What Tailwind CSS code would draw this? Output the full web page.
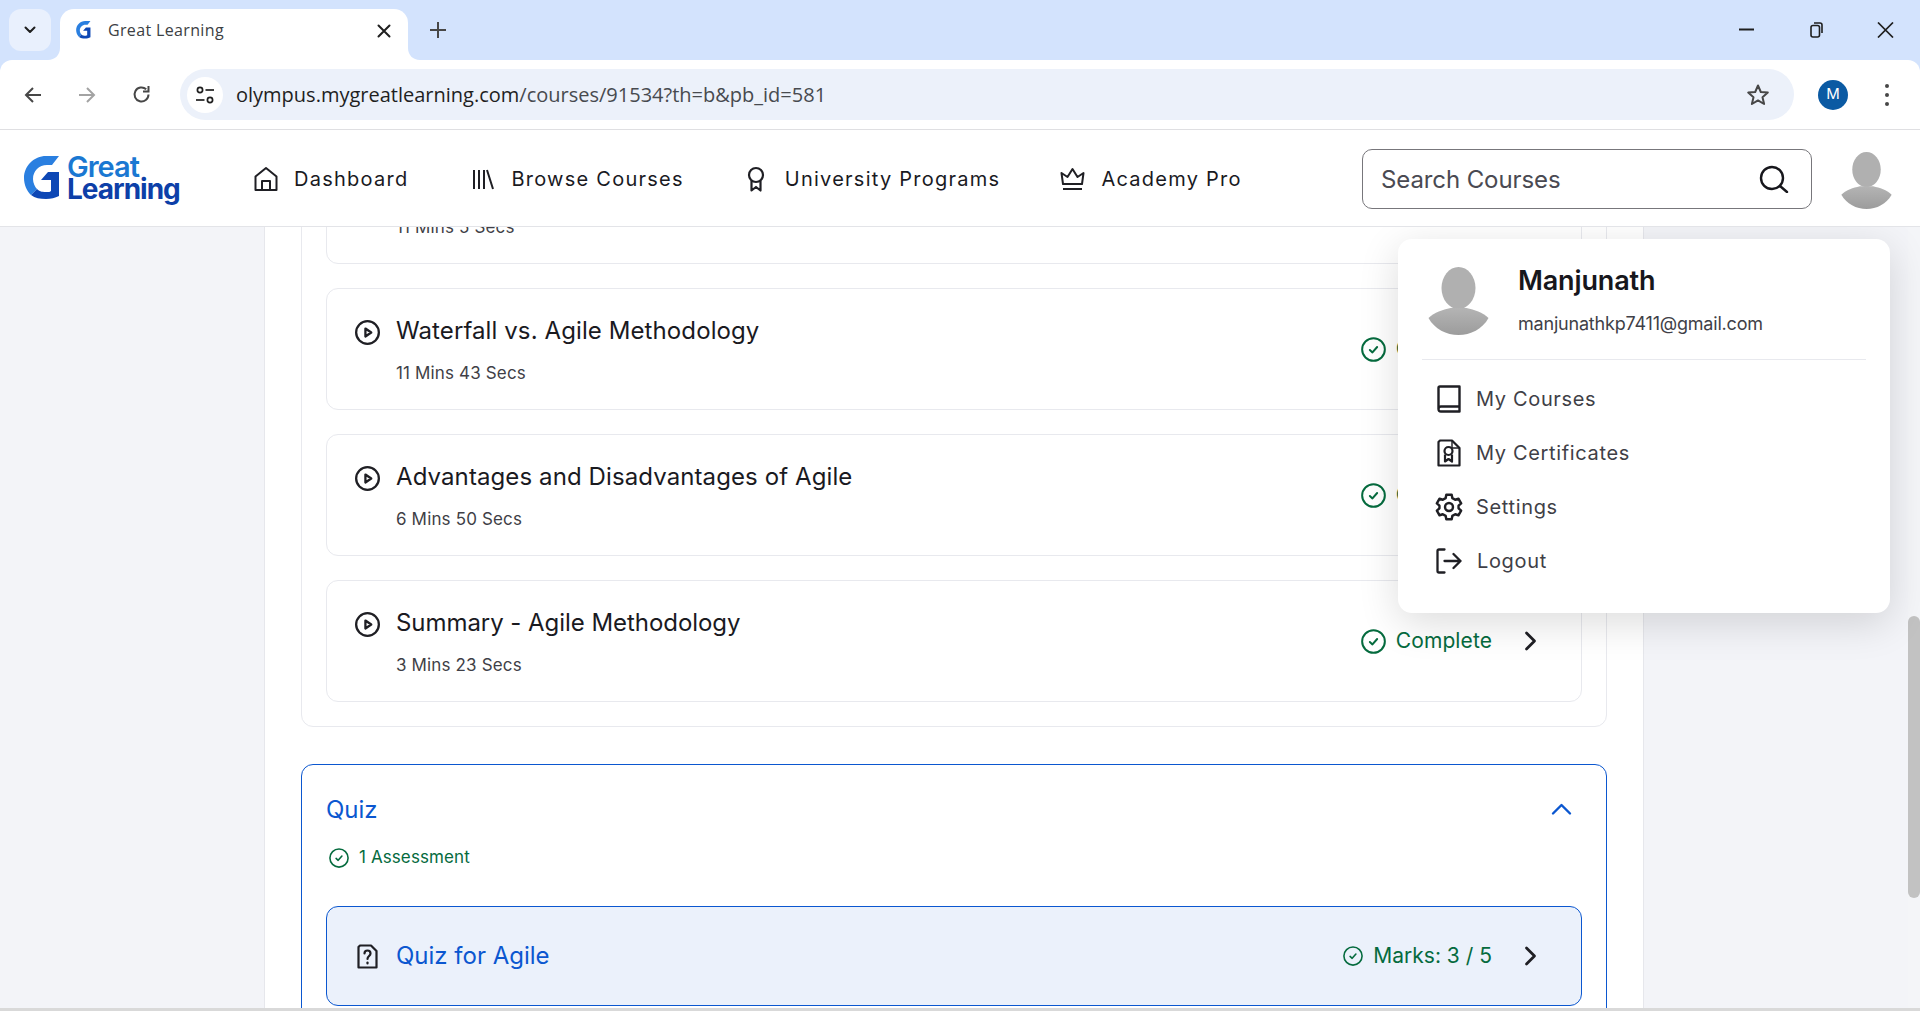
<!DOCTYPE html>
<html lang="en">
<head>
    <meta charset="UTF-8">
    <meta name="viewport" content="width=device-width, initial-scale=1.0">
    <title>Great Learning</title>
    <script src="https://cdn.jsdelivr.net/npm/@tailwindcss/browser@4"></script>
</head>
<body class="h-screen overflow-hidden flex flex-col bg-[#d3e3fd] font-['Inter',sans-serif] text-[#1a1a1f]">
    <!-- Shared icons -->
    <svg class="absolute w-0 h-0">
        <defs>
            <linearGradient id="avatarFill" x1="0" y1="0" x2="0" y2="1">
                <stop offset="0" stop-color="#b4b4b4"/>
                <stop offset="1" stop-color="#9c9c9c"/>
            </linearGradient>
            <symbol id="avatar" viewBox="0 0 60 68">
                <ellipse cx="30" cy="21" rx="17" ry="21" fill="#b0b0b0"/>
                <path d="M0 51 C6 45 14 43 22 41 L38 41 C46 43 54 45 60 51 C54 62 42 68 30 68 C18 68 6 62 0 51 Z" fill="url(#avatarFill)"/>
            </symbol>
            <symbol id="check" viewBox="0 0 24 24">
                <circle cx="12" cy="12" r="10.9" fill="none" stroke="currentColor" stroke-width="1.9"/>
                <path d="M8.5 12.5 L11 14.8 L15.5 9.6" fill="none" stroke="currentColor" stroke-width="1.9" stroke-linecap="round" stroke-linejoin="round"/>
            </symbol>
            <symbol id="play" viewBox="0 0 24 24">
                <circle cx="12" cy="12" r="10.9" fill="none" stroke="currentColor" stroke-width="2.2"/>
                <path d="M10 8.2 L15.6 12 L10 15.8 Z" fill="none" stroke="currentColor" stroke-width="2.2" stroke-linejoin="round"/>
            </symbol>
            <symbol id="chevron" viewBox="0 0 12 20">
                <path d="M2 2 L10 10 L2 18" fill="none" stroke="currentColor" stroke-width="2.8" stroke-linecap="round" stroke-linejoin="round"/>
            </symbol>
        </defs>
    </svg>

    <!-- Tab strip -->
    <div class="h-[60px] shrink-0 flex items-start text-[#1f1f1f]">
        <div class="ml-[9px] mt-[9px] w-[42px] h-[42px] rounded-[12px] bg-[#e9f0fd] flex items-center justify-center">
            <svg width="14" height="10" viewBox="0 0 14 10"><path d="M2.5 2.5 L7 7 L11.5 2.5" fill="none" stroke="#1f1f1f" stroke-width="2" stroke-linecap="round" stroke-linejoin="round"/></svg>
        </div>
        <div class="relative ml-[9px] mt-[9px] w-[348px] h-[51px] bg-white rounded-t-[14px] flex items-center pl-[16px] pb-[9px]">
            <svg class="absolute -left-[12px] bottom-0" width="12" height="12" viewBox="0 0 12 12"><path d="M12 0 V12 H0 C7 12 12 7 12 0 Z" fill="#fff"/></svg>
            <svg class="absolute -right-[12px] bottom-0" width="12" height="12" viewBox="0 0 12 12"><path d="M0 0 V12 H12 C5 12 0 7 0 0 Z" fill="#fff"/></svg>
            <svg width="15" height="18" viewBox="0 0 36 44">
                <path d="M35 0 L28 9 H23 C15 9 9 15 9 23 C9 27 11 31 13 33 L7 39 C3 35 0 29 0 22 C0 10 10 0 22 0 Z" fill="#2a7fe0"/>
                <path d="M7 39 L13 33 C16 36 19 36 23 36 C25 36 26 36 27 35 V24 H17 L24 16 H35 V40 C31 42 27 43 22 43 C16 43 11 42 7 39 Z" fill="#0d47b5"/>
            </svg>
            <span class="ml-[17px] text-[16px] tracking-[0.35px] text-[#3c4043] font-['Open_Sans',sans-serif]">Great Learning</span>
            <svg class="absolute left-[317px] top-[15px]" width="14" height="14" viewBox="0 0 14 14"><path d="M1.5 1.5 L12.5 12.5 M12.5 1.5 L1.5 12.5" stroke="#1f1f1f" stroke-width="2" stroke-linecap="round"/></svg>
        </div>
        <svg class="ml-[21px] mt-[21px]" width="18" height="18" viewBox="0 0 18 18"><path d="M9 1 V17 M1 9 H17" stroke="#474747" stroke-width="2"/></svg>

        <div class="ml-auto flex items-center mt-[21px] mr-[26px]">
            <svg width="15" height="18" viewBox="0 0 15 18"><path d="M0 8.5 H15" stroke="#1f1f1f" stroke-width="2"/></svg>
            <svg class="ml-[56px]" width="13" height="16" viewBox="0 0 13 16"><rect x="1" y="3.5" width="8.5" height="11.5" rx="2" fill="none" stroke="#1f1f1f" stroke-width="1.6"/><path d="M4 1 H10 C11.2 1 12 1.8 12 3 V11" fill="none" stroke="#1f1f1f" stroke-width="1.6"/></svg>
            <svg class="ml-[54px]" width="17" height="16" viewBox="0 0 17 16"><path d="M1 0.5 L16 15.5 M16 0.5 L1 15.5" stroke="#1f1f1f" stroke-width="1.7"/></svg>
        </div>
    </div>

    <!-- Browser toolbar -->
    <div class="h-[70px] shrink-0 bg-white rounded-t-[12px] border-b border-[#dfdfe2] flex items-center text-[#474747]">
        <svg class="ml-[24px]" width="18" height="18" viewBox="0 0 18 18"><path d="M17 9 H2 M9 2 L2 9 L9 16" fill="none" stroke="#474747" stroke-width="2"/></svg>
        <svg class="ml-[36px]" width="18" height="18" viewBox="0 0 18 18"><path d="M1 9 H16 M9 2 L16 9 L9 16" fill="none" stroke="#a3a3a3" stroke-width="2"/></svg>
        <svg class="ml-[36px]" width="19" height="19" viewBox="0 0 19 19"><path d="M16.5 9.5 A7 7 0 1 1 14.2 4.3" fill="none" stroke="#474747" stroke-width="2"/><path d="M16.5 1 V6.5 H11" fill="none" stroke="#474747" stroke-width="2"/></svg>
        <div class="ml-[29px] w-[1614px] h-[51px] rounded-full bg-[#ecf1fa] flex items-center pl-[7px] pr-[24px]">
            <div class="w-[36px] h-[36px] rounded-full bg-white flex items-center justify-center">
                <svg width="20" height="20" viewBox="0 0 20 20" fill="none" stroke="#1f1f1f" stroke-width="1.7"><circle cx="5" cy="5" r="2.6"/><path d="M10.5 5 H19"/><circle cx="15" cy="15" r="2.6"/><path d="M1 15 H9.5"/></svg>
            </div>
            <span class="ml-[13px] text-[20px] text-[#1f1f1f] font-['Open_Sans',sans-serif]">olympus.mygreatlearning.com<span class="text-[#474a4f]">/courses/91534?th=b&amp;pb_id=581</span></span>
            <svg class="ml-auto" width="24" height="24" viewBox="0 0 24 24"><path d="M12 2.5 L14.8 9 L21.8 9.6 L16.5 14.2 L18.1 21 L12 17.4 L5.9 21 L7.5 14.2 L2.2 9.6 L9.2 9 Z" fill="none" stroke="#474747" stroke-width="2" stroke-linejoin="round"/></svg>
        </div>
        <div class="ml-[24px] w-[30px] h-[30px] rounded-full bg-[#0b5aa3] text-white text-[15px] flex items-center justify-center">M</div>
        <div class="ml-[37px] flex flex-col gap-[5px]">
            <span class="w-[4px] h-[4px] rounded-full bg-[#474747]"></span>
            <span class="w-[4px] h-[4px] rounded-full bg-[#474747]"></span>
            <span class="w-[4px] h-[4px] rounded-full bg-[#474747]"></span>
        </div>
    </div>

    <!-- Site header -->
    <header class="relative z-10 h-[97px] shrink-0 bg-white border-b border-[#e3e4e8] flex items-center">
        <div class="ml-[24px] w-[230px] flex items-center">
            <svg width="36" height="44" viewBox="0 0 36 44">
                <path d="M35 0 L28 9 H23 C15 9 9 15 9 23 C9 27 11 31 13 33 L7 39 C3 35 0 29 0 22 C0 10 10 0 22 0 Z" fill="#2a7fe0"/>
                <path d="M7 39 L13 33 C16 36 19 36 23 36 C25 36 26 36 27 35 V24 H17 L24 16 H35 V40 C31 42 27 43 22 43 C16 43 11 42 7 39 Z" fill="#0d47b5"/>
            </svg>
            <div class="ml-[7px] font-semibold tracking-[-1px]">
                <div class="text-[29px] leading-[22px] text-[#1a78d2]">Great</div>
                <div class="text-[28px] leading-[22px] font-bold text-[#0d3fa8]">Learning</div>
            </div>
        </div>
        <nav class="mt-[1px] flex items-center text-[20px] tracking-[1.25px] text-[#1a1a1f]">
            <svg class="mt-[1px]" width="24" height="26" viewBox="0 0 24 26" fill="none" stroke="#1f1f24" stroke-width="2" stroke-linejoin="round"><path d="M12 2 L22.5 10.5 V24 H1.5 V10.5 Z"/><path d="M8 24 V15 H16 V24"/></svg>
            <span class="ml-[16px]">Dashboard</span>
            <svg class="ml-[64px]" width="22" height="22" viewBox="0 0 22 22" fill="none" stroke="#1f1f24" stroke-width="2"><path d="M2 2 V21 M7 2 V21 M12 2 V21 M15 2 L21 21"/></svg>
            <span class="ml-[17px]">Browse Courses</span>
            <svg class="ml-[63px] mt-[1px]" width="18" height="26" viewBox="0 0 18 26" fill="none" stroke="#1f1f24" stroke-width="2.2" stroke-linejoin="round"><circle cx="9" cy="9" r="7"/><path d="M4.5 15 V24.5 L9 21 L13.5 24.5 V15"/></svg>
            <span class="ml-[20px]">University Programs</span>
            <svg class="ml-[60px]" width="25" height="24" viewBox="0 0 25 24" fill="none" stroke="#1f1f24" stroke-width="2" stroke-linejoin="round"><path d="M3 17 L1.5 6 L7.5 10 L12.5 2 L17.5 10 L23.5 6 L22 17 Z"/><path d="M3 22 H22"/></svg>
            <span class="ml-[16px]">Academy Pro</span>
        </nav>
        <div class="absolute left-[1362px] top-[19px] w-[450px] h-[60px] rounded-[10px] border border-[#77767b] flex items-center pl-[18px] pr-[22px] text-[24px] tracking-[-0.1px] text-[#4a4a52]">
            <span class="mt-[2px]">Search Courses</span>
            <svg class="ml-auto" width="30" height="28" viewBox="0 0 30 28" fill="none" stroke="#17171c" stroke-width="2.4" stroke-linecap="round"><circle cx="13" cy="13" r="11"/><path d="M21 21 L28 27"/></svg>
        </div>
        <svg class="absolute left-[1840px] top-[22px]" width="53" height="57"><use href="#avatar"/></svg>
    </header>

    <!-- Page body -->
    <main class="relative flex-1 min-h-0 overflow-hidden flex">
        <div class="w-[264px] shrink-0 bg-[#f3f4f8]"></div>
        <section class="w-[1380px] shrink-0 bg-white border-x border-[#e6e7ec] pl-[36px] overflow-hidden">
            <div class="-mt-[110px] w-[1306px]">
                <!-- Lessons module -->
                <div class="rounded-[12px] border border-[#e8e9ee] p-[24px] flex flex-col gap-[24px]">
                    <div class="relative h-[122px] rounded-[12px] border border-[#e8e9ee] flex items-center justify-between pl-[28px] pr-[44px]">
                        <div class="flex items-start pt-[2px]">
                            <div class="ml-[41px]">
                                <div class="h-[32px]"></div>
                                <div class="mt-[14px] text-[17px] leading-[24px] tracking-[0.15px] text-[#3f3f47]">11 Mins 5 Secs</div>
                            </div>
                        </div>
                    </div>
                    <div class="relative h-[122px] rounded-[12px] border border-[#e8e9ee] flex items-center justify-between pl-[28px] pr-[44px]">
                        <div class="flex items-start pt-[2px]">
                            <svg class="mt-[5px] text-[#1f1f24]" width="25" height="25"><use href="#play"/></svg>
                            <div class="ml-[16px]">
                                <div class="text-[24px] leading-[32px] tracking-[0.1px]">Waterfall vs. Agile Methodology</div>
                                <div class="mt-[14px] text-[17px] leading-[24px] tracking-[0.15px] text-[#3f3f47]">11 Mins 43 Secs</div>
                            </div>
                        </div>
                        <div class="flex items-center">
                            <svg class="text-[#056b3e]" width="25" height="25"><use href="#check"/></svg>
                            <span class="ml-[10px] text-[21px] tracking-[0.1px] text-[#056b3e]">Complete</span>
                            <svg class="ml-[32px] text-[#1f1f24]" width="13" height="20"><use href="#chevron"/></svg>
                        </div>
                    </div>
                    <div class="relative h-[122px] rounded-[12px] border border-[#e8e9ee] flex items-center justify-between pl-[28px] pr-[44px]">
                        <div class="flex items-start pt-[2px]">
                            <svg class="mt-[5px] text-[#1f1f24]" width="25" height="25"><use href="#play"/></svg>
                            <div class="ml-[16px]">
                                <div class="text-[24px] leading-[32px] tracking-[0.1px]">Advantages and Disadvantages of Agile</div>
                                <div class="mt-[14px] text-[17px] leading-[24px] tracking-[0.15px] text-[#3f3f47]">6 Mins 50 Secs</div>
                            </div>
                        </div>
                        <div class="flex items-center">
                            <svg class="text-[#056b3e]" width="25" height="25"><use href="#check"/></svg>
                            <span class="ml-[10px] text-[21px] tracking-[0.1px] text-[#056b3e]">Complete</span>
                            <svg class="ml-[32px] text-[#1f1f24]" width="13" height="20"><use href="#chevron"/></svg>
                        </div>
                    </div>
                    <div class="relative h-[122px] rounded-[12px] border border-[#e8e9ee] flex items-center justify-between pl-[28px] pr-[44px]">
                        <div class="flex items-start pt-[2px]">
                            <svg class="mt-[5px] text-[#1f1f24]" width="25" height="25"><use href="#play"/></svg>
                            <div class="ml-[16px]">
                                <div class="text-[24px] leading-[32px] tracking-[-0.05px]">Summary - Agile Methodology</div>
                                <div class="mt-[14px] text-[17px] leading-[24px] tracking-[0.15px] text-[#3f3f47]">3 Mins 23 Secs</div>
                            </div>
                        </div>
                        <div class="flex items-center">
                            <svg class="text-[#056b3e]" width="25" height="25"><use href="#check"/></svg>
                            <span class="ml-[10px] text-[21px] tracking-[0.1px] text-[#056b3e]">Complete</span>
                            <svg class="ml-[32px] text-[#1f1f24]" width="13" height="20"><use href="#chevron"/></svg>
                        </div>
                    </div>
                </div>

                <!-- Quiz module -->
                <div class="mt-[37px] rounded-[12px] border border-[#0b57d0] px-[24px] pt-[29px] pb-[24px]">
                    <div class="flex items-center justify-between h-[32px]">
                        <span class="text-[24px] leading-[32px] text-[#0b57d0]">Quiz</span>
                        <svg class="mr-[10px] -mt-[2px]" width="21" height="14" viewBox="0 0 21 14"><path d="M2 11.5 L10.5 3 L19 11.5" fill="none" stroke="#0b57d0" stroke-width="2.4" stroke-linecap="round" stroke-linejoin="round"/></svg>
                    </div>
                    <div class="mt-[20px] h-[24px] flex items-center text-[#056b3e]">
                        <svg class="ml-[3px]" width="20" height="20"><use href="#check"/></svg>
                        <span class="ml-[10px] text-[17px] tracking-[0.1px]">1 Assessment</span>
                    </div>
                    <div class="mt-[36px] h-[100px] rounded-[12px] border border-[#0b57d0] bg-[#ebf1fb] flex items-center justify-between pl-[30px] pr-[44px]">
                        <div class="flex items-center">
                            <svg width="21" height="25" viewBox="0 0 21 25" fill="none" stroke="#1f1f24" stroke-width="2.2" stroke-linejoin="round"><path d="M3 1.5 H14 L19.5 7 V23.5 H1.5 V3 Z"/><path d="M7.5 9.5 C7.5 5.5 13.5 5.5 13.5 9.5 C13.5 12 10.5 12 10.5 15" stroke-linecap="round"/><path d="M10.5 18.5 V19.5" stroke-linecap="round"/></svg>
                            <span class="ml-[18px] text-[24px] text-[#0b57d0]">Quiz for Agile</span>
                        </div>
                        <div class="flex items-center text-[#056b3e]">
                            <svg width="20" height="20"><use href="#check"/></svg>
                            <span class="ml-[10px] text-[21px]">Marks: 3 / 5</span>
                            <svg class="ml-[32px] text-[#1f1f24]" width="13" height="20"><use href="#chevron"/></svg>
                        </div>
                    </div>
                </div>
            </div>
        </section>
        <div class="flex-1 bg-[#f3f4f8]"></div>

        <!-- Scrollbar -->
        <div class="w-[12px] shrink-0 bg-[#f4f5f8] relative">
            <div class="absolute top-[389px] left-0 w-[12px] h-[282px] rounded-full bg-[#c2c2c2]"></div>
        </div>

        <!-- Profile menu -->
        <div class="absolute top-[12px] right-[30px] w-[492px] bg-white rounded-[14px] shadow-[0_10px_40px_rgba(0,0,0,0.14)] pt-[28px] pb-[25px]">
            <div class="flex pl-[29px]">
                <svg width="63" height="68"><use href="#avatar"/></svg>
                <div class="ml-[28px] -mt-[2px]">
                    <div class="text-[27px] leading-[32px] font-semibold tracking-[-0.15px] text-[#17171c]">Manjunath</div>
                    <div class="mt-[14px] text-[18px] leading-[26px] tracking-[-0.2px] text-[#3f3f47]">manjunathkp7411@gmail.com</div>
                </div>
            </div>
            <div class="mt-[22px] mx-[24px] border-t border-[#e8e9ee]"></div>
            <ul class="mt-[12px] text-[20px] tracking-[0.65px] text-[#3f3f47]">
                <li class="h-[54px] flex items-center pl-[39px]">
                    <svg width="24" height="28" viewBox="0 0 24 28" fill="none" stroke="#1f1f24" stroke-width="2.4" stroke-linejoin="round"><path d="M1.5 24 V3 Q1.5 1.5 3 1.5 H22.5 V26.5 H4 Q1.5 26.5 1.5 24 Q1.5 21.5 4 21.5 H22.5"/></svg>
                    <span class="ml-[15px]">My Courses</span>
                </li>
                <li class="h-[54px] flex items-center pl-[39px]">
                    <svg width="24" height="28" viewBox="0 0 24 28" fill="none" stroke="#1f1f24" stroke-width="2.2" stroke-linejoin="round"><path d="M3 1.5 H15 L22.5 9 V26.5 H1.5 V3 Z"/><path d="M15 1.5 V9 H22.5" stroke-width="1.4"/><circle cx="11.5" cy="12" r="4"/><path d="M8 15.5 V22.5 L11.5 20 L15 22.5 V15.5"/></svg>
                    <span class="ml-[15px]">My Certificates</span>
                </li>
                <li class="h-[54px] flex items-center pl-[37px]">
                    <svg width="28" height="28" viewBox="0 0 24 24" fill="none" stroke="#1f1f24" stroke-width="2.1" stroke-linejoin="round"><path d="M9.7 2.5 H14.3 L14.9 5.4 L17.3 6.8 L20.1 5.9 L22.4 9.9 L20.2 11.9 V14.1 L22.4 16.1 L20.1 20.1 L17.3 19.2 L14.9 20.6 L14.3 23.5 H9.7 L9.1 20.6 L6.7 19.2 L3.9 20.1 L1.6 16.1 L3.8 14.1 V11.9 L1.6 9.9 L3.9 5.9 L6.7 6.8 L9.1 5.4 Z" transform="translate(0 -1)"/><circle cx="12" cy="12" r="3.4"/></svg>
                    <span class="ml-[13px]">Settings</span>
                </li>
                <li class="h-[54px] flex items-center pl-[38px]">
                    <svg width="26" height="26" viewBox="0 0 26 26" fill="none" stroke="#1f1f24" stroke-width="2.3" stroke-linecap="round" stroke-linejoin="round"><path d="M8.5 1.5 H3 Q1.5 1.5 1.5 3 V23 Q1.5 24.5 3 24.5 H8.5"/><path d="M8.5 13 H24.5 M17.5 6 L24.5 13 L17.5 20"/></svg>
                    <span class="ml-[15px]">Logout</span>
                </li>
            </ul>
        </div>
    </main>

    <!-- Bottom edge of the window -->
    <div class="h-[3px] shrink-0 bg-[#d9d9d9]"></div>
</body>
</html>
